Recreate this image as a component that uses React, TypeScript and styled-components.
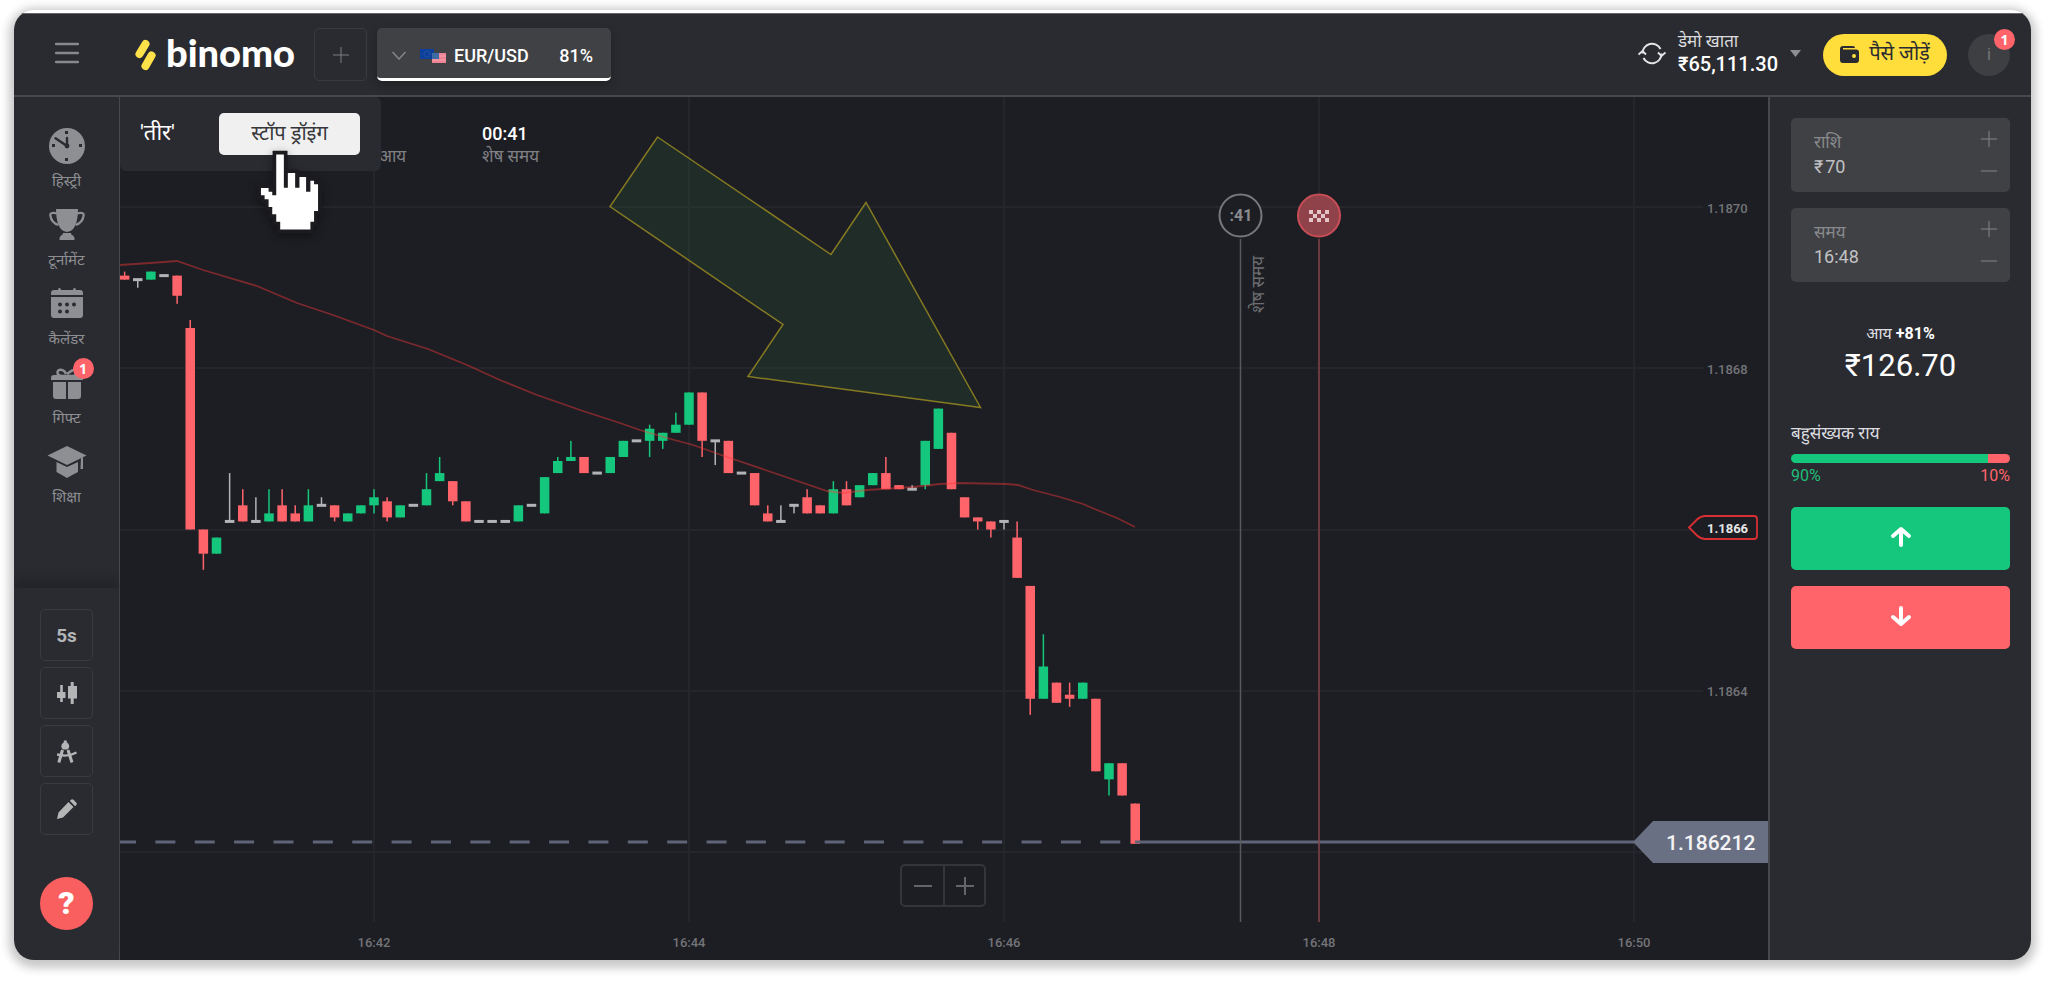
import React from "react";
import styled, { createGlobalStyle } from "styled-components";

const c = {
  panel: "#2a2b30",
  chart: "#1d1e23",
  line: "#47484c",
  raised: "#404144",
  edge: "#3a3b3f",
  icon: "#8e8f93",
  green: "#14c77c",
  red: "#ff646b",
  yellow: "#ffdd3b",
  slate: "#6a7083",
};

const Global = createGlobalStyle`
  *, *::before, *::after { box-sizing: border-box; }
  body { margin: 0; background: #fff; font-family: Roboto, "Noto Sans Devanagari", "Noto Sans", sans-serif; color: #fff; }
  button, input { font: inherit; color: inherit; margin: 0; }
  button { cursor: pointer; padding: 0; border: 0; background: none; }
  svg { display: block; flex: none; }
`;

const Page = styled.div`
  display: flex;
  min-height: 100vh;
  padding: 10px 17px 21px 14px;
`;

const Frame = styled.div`
  flex: 1;
  min-width: 0;
  display: flex;
  flex-direction: column;
  padding-top: 3px;
  background: #fff;
  border-radius: 20px;
  overflow: hidden;
  box-shadow: 0 3px 10px 5px rgba(0, 0, 0, 0.22);
`;

const Header = styled.header`
  display: flex;
  align-items: center;
  height: 84px;
  padding-right: 21px;
  background: ${c.panel};
  border-top: 1px solid #66676a;
  border-bottom: 2px solid ${c.line};
`;

const MenuButton = styled.button`
  display: flex;
  justify-content: center;
  width: 106px;
  padding-bottom: 4px;
  color: #88898c;
`;

const Logo = styled.a`
  display: flex;
  align-items: center;
  gap: 10px;
  width: 179px;
  padding-left: 15px;
  color: #fff;
  text-decoration: none;
`;

const Wordmark = styled.span`
  padding-bottom: 5px;
  font: 900 38px/40px Lato, sans-serif;
`;

const AddTab = styled.button`
  display: grid;
  place-items: center;
  width: 53px;
  height: 53px;
  margin-left: 15px;
  border: 1px solid ${c.edge};
  border-radius: 5px;
  color: #7d7e82;
`;

const AssetTab = styled.button`
  display: flex;
  align-items: center;
  width: 234px;
  height: 53px;
  margin-left: 10px;
  padding: 5px 18px 0 15px;
  background: ${c.raised};
  border-bottom: 3px solid #fff;
  border-radius: 5px;
  box-shadow: 0 4px 10px rgba(0, 0, 0, 0.25);
  font-size: 18px;
  font-weight: 500;
  line-height: 22px;
`;

const AssetName = styled.span`
  flex: 1;
  padding-left: 8px;
  text-align: left;
`;

const Account = styled.button`
  display: flex;
  align-items: center;
  gap: 12px;
  margin-left: auto;
  padding-bottom: 3px;
  text-align: left;
`;

const AccountText = styled.span`
  display: flex;
  flex-direction: column;
  font-size: 17px;
  line-height: 23px;
  color: #dcdcde;
`;

const Balance = styled.strong`
  font-size: 20px;
  font-weight: 500;
  color: #fff;
`;

const Deposit = styled.button`
  display: flex;
  align-items: center;
  justify-content: center;
  gap: 10px;
  width: 124px;
  height: 42px;
  margin-left: 22px;
  border-radius: 21px;
  background: ${c.yellow};
  color: #2a2b30;
  font-size: 20px;
`;

const Avatar = styled.button`
  position: relative;
  width: 42px;
  height: 42px;
  margin-left: 21px;
  border-radius: 50%;
  background: #3e3f43;
  color: #77787c;
  font-size: 16px;
`;

const Badge = styled.span<{ $top: number; $right: number }>`
  position: absolute;
  top: ${(p) => p.$top}px;
  right: ${(p) => p.$right}px;
  width: 21px;
  height: 21px;
  border-radius: 50%;
  background: ${c.red};
  color: #fff;
  font: 700 14px/21px "Open Sans", sans-serif;
  text-align: center;
`;

const Body = styled.div`
  flex: 1;
  display: grid;
  grid-template-columns: 106px minmax(0, 1fr) 263px;
`;

const Sidebar = styled.aside`
  display: flex;
  flex-direction: column;
  background: ${c.panel};
  border-right: 1px solid ${c.line};
`;

const Nav = styled.nav`
  flex: 1;
  display: flex;
  flex-direction: column;
  align-items: center;
  padding-top: 31px;
`;

const NavItem = styled.a`
  position: relative;
  display: flex;
  flex-direction: column;
  align-items: center;
  gap: 7px;
  height: 79px;
  color: ${c.icon};
  font-size: 15px;
  line-height: 20px;
  text-decoration: none;
`;

const Tools = styled.div`
  display: flex;
  flex-direction: column;
  align-items: center;
  gap: 6px;
  padding: 21px 0 30px;
  box-shadow: 0 -8px 12px rgba(0, 0, 0, 0.2);
`;

const Tool = styled.button`
  display: grid;
  place-items: center;
  width: 53px;
  height: 52px;
  border: 1px solid ${c.edge};
  border-radius: 5px;
  color: #b4b5b7;
  font-size: 19px;
  font-weight: 700;
`;

const Help = styled.button`
  width: 53px;
  height: 53px;
  margin-top: 36px;
  border-radius: 50%;
  background: #fa5f60;
  font-size: 32px;
  font-weight: 900;
  line-height: 53px;
`;

const ChartArea = styled.main`
  position: relative;
  background: ${c.chart};
  font-size: 16px;
`;

const Drawing = styled.svg`
  width: 100%;
  height: auto;
`;

const Stats = styled.div`
  position: absolute;
  top: 26px;
  left: 259px;
  display: flex;
`;

const Stat = styled.div`
  width: 103px;
  height: 44px;
  display: flex;
  flex-direction: column;
  justify-content: flex-end;
  font-size: 17px;
  line-height: 22px;
  color: #808185;
`;

const StatValue = styled.strong`
  font-size: 18px;
  font-weight: 500;
  color: #fff;
`;

const DrawBar = styled.div`
  position: absolute;
  top: 0;
  left: 0;
  display: flex;
  align-items: center;
  justify-content: space-between;
  width: 261px;
  height: 74px;
  padding: 0 21px 0 20px;
  background: ${c.panel};
  border-radius: 0 6px 6px 6px;
  font-size: 22px;
`;

const StopButton = styled.button`
  width: 141px;
  height: 42px;
  background: #f0f0f0;
  border-radius: 5px;
  color: #36373b;
  font-size: 20px;
`;

const Pointer = styled.svg`
  position: absolute;
  top: 50px;
  left: 133px;
  filter: drop-shadow(0 3px 5px rgba(0, 0, 0, 0.4));
`;

const Zoom = styled.div`
  position: absolute;
  bottom: 53px;
  left: 780px;
  display: flex;
  border: 2px solid #343539;
  border-radius: 5px;
  color: #646569;
`;

const ZoomButton = styled.button`
  display: grid;
  place-items: center;
  width: 41px;
  height: 39px;
  & + & { border-left: 2px solid #343539; }
`;

const Trade = styled.aside`
  display: flex;
  flex-direction: column;
  padding: 21px 21px 0;
  background: ${c.panel};
  border-left: 2px solid ${c.line};
`;

const Field = styled.div`
  display: flex;
  justify-content: space-between;
  height: 74px;
  margin-bottom: 16px;
  padding: 12px 13px 12px 23px;
  background: ${c.raised};
  border-radius: 5px;
`;

const FieldText = styled.div`
  display: flex;
  flex-direction: column;
  min-width: 0;
`;

const FieldLabel = styled.label`
  font-size: 17px;
  line-height: 25px;
  color: #88898d;
`;

const FieldInput = styled.input`
  width: 120px;
  height: 22px;
  padding: 0;
  border: 0;
  background: none;
  color: #c1c2c4;
  font-size: 18px;
`;

const Steps = styled.div`
  display: flex;
  flex-direction: column;
  justify-content: space-between;
  color: #85868a;
  button { height: 18px; }
`;

const Income = styled.div`
  padding-top: 22px;
  text-align: center;
  font-size: 16px;
  line-height: 28px;
  color: #dedee0;
  strong { color: #fff; font-weight: 700; }
`;

const IncomeSum = styled.div`
  font-size: 31px;
  line-height: 36px;
  color: #fff;
`;

const Opinion = styled.div`
  margin-top: 35px;
  font-size: 17px;
  line-height: 28px;
  color: #dedee0;
`;

const Bar = styled.div`
  display: flex;
  height: 9px;
  margin-top: 7px;
  border-radius: 5px;
  overflow: hidden;
`;

const Share = styled.span<{ $part: number; $color: string }>`
  flex: ${(p) => p.$part};
  background: ${(p) => p.$color};
`;

const Shares = styled.div`
  display: flex;
  justify-content: space-between;
  margin: 4px 0 22px;
  font-size: 16px;
  line-height: 18px;
`;

const Tint = styled.span<{ $color: string }>`
  color: ${(p) => p.$color};
`;

const Deal = styled.button<{ $color: string }>`
  display: grid;
  place-items: center;
  height: 63px;
  margin-bottom: 16px;
  padding-bottom: 4px;
  background: ${(p) => p.$color};
  border-radius: 5px;
`;

const PlusIcon = ({ size = 16, width = 1 }: { size?: number; width?: number }) => (
  <svg width={size} height={size} viewBox={`0 0 ${size} ${size}`} stroke="currentColor" strokeWidth={width}>
    <path d={`M0 ${size / 2}H${size}M${size / 2} 0V${size}`} />
  </svg>
);

const MinusIcon = ({ size = 16, width = 1 }: { size?: number; width?: number }) => (
  <svg width={size} height={size} viewBox={`0 0 ${size} ${size}`} stroke="currentColor" strokeWidth={width}>
    <path d={`M0 ${size / 2}H${size}`} />
  </svg>
);

const ClockIcon = () => (
  <svg width="36" height="36" viewBox="0 0 36 36">
    <circle cx="18" cy="18" r="18" fill="currentColor" />
    <g fill={c.panel}>
      <rect x="16" y="3" width="3" height="3" /><rect x="16" y="30" width="3" height="3" />
      <rect x="3" y="16" width="3" height="3" /><rect x="30" y="16" width="3" height="3" />
      <circle cx="18" cy="18" r="2.4" />
    </g>
    <path d="M18 18V10M18 18L6.500 10.200" stroke={c.panel} strokeWidth="2.400" strokeLinecap="round" />
  </svg>
);

const TrophyIcon = () => (
  <svg width="36" height="36" viewBox="0 0 36 36" fill="currentColor">
    <path d="M7 2H29C29 14 26 24.500 18 25C10 24.500 7 14 7 2Z" />
    <path d="M8 6.500C4 5 0.500 6 1.500 9C2 13 5 16.500 9.500 18M28 6.500C32 5 35.500 6 34.500 9C34 13 31 16.500 26.500 18" fill="none" stroke="currentColor" strokeWidth="2.200" />
    <path d="M14 26H22Q22 28 24 28.500Q26 30 25.500 33H10.500Q10 30 12 28.500Q14 28 14 26Z" />
  </svg>
);

const CalendarIcon = () => (
  <svg width="36" height="36" viewBox="0 0 36 36" fill="currentColor">
    <path d="M2 9V7Q2 4 5 4H9Q9 2 10.500 2Q12 2 12 4H24Q24 2 25.500 2Q27 2 27 4H31Q34 4 34 7V9Z" />
    <path d="M2 11H34V29Q34 32 31 32H5Q2 32 2 29Z" />
    <g fill={c.panel}>
      <circle cx="11" cy="18.500" r="2" /><circle cx="18" cy="18.500" r="2" /><circle cx="25" cy="18.500" r="2" />
      <circle cx="11" cy="25.500" r="2" /><circle cx="18" cy="25.500" r="2" />
    </g>
  </svg>
);

const GiftIcon = () => (
  <svg width="36" height="36" viewBox="0 -2 36 36" fill="currentColor">
    <path d="M17 7C15 1.500 8 1.500 8.500 6Q9 8.500 12 9H24C28 9 28 2 23 3.500L18 7" fill="none" stroke="currentColor" strokeWidth="2.500" />
    <path d="M2 13V11Q2 8 5 8H31Q34 8 34 11V13Z" />
    <path d="M4 15H17V32H7Q4 32 4 29ZM19 15H32V29Q32 32 29 32H19Z" />
  </svg>
);

const CapIcon = () => (
  <svg width="40" height="36" viewBox="0 0 40 36" fill="currentColor">
    <path d="M20 2L39.500 11.500L20 21L0.500 11.500Z" />
    <path d="M9.500 18L20 23L31 18V28Q26 30.500 20 34Q14 30.500 9.500 28Z" />
    <path d="M34 14L36 13V25H33.500Z" />
  </svg>
);

const nav = [
  { label: "हिस्ट्री", Icon: ClockIcon },
  { label: "टूर्नामेंट", Icon: TrophyIcon },
  { label: "कैलेंडर", Icon: CalendarIcon },
  { label: "गिफ्ट", Icon: GiftIcon, badge: "1" },
  { label: "शिक्षा", Icon: CapIcon },
];

/* Candles as [open, close, high, low], in ticks counted from the 1.1866 line. */
const FIRST = -19;
const candles: number[][] = [
  [63, 62, 64, 62], [62, 62, 62, 60], [62, 64], [63, 63], [63, 58, 63, 56], [50, 0, 52, 0], [0, -6, 0, -10],
  [-6, -2], [2, 2, 14, 2], [6, 2, 10, 2], [2, 2, 8, 2], [2, 4, 10, 2], [6, 2, 10, 2], [4, 2, 6, 2], [2, 6, 10, 2],
  [6, 6, 8, 6], [6, 3, 6, 2], [2, 4], [4, 6], [6, 8, 10, 4], [7, 3, 8, 2], [3, 6], [6, 6], [6, 10, 14, 6],
  [12, 14, 18, 12], [12, 7, 12, 6], [7, 2], [2, 2], [2, 2], [2, 2], [2, 6], [6, 6], [4, 13], [14, 17, 18, 14],
  [17, 18, 22, 17], [18, 14], [14, 14], [14, 18], [18, 22], [22, 22], [22, 25, 26, 18], [22, 24, 24, 20],
  [24, 26, 29, 24], [26, 34], [34, 22, 34, 18], [22, 22, 22, 16], [22, 14], [14, 14], [14, 6], [4, 2, 6, 2],
  [2, 2, 6, 2], [6, 6, 6, 4], [8, 4, 10, 4], [6, 4], [4, 10, 12, 4], [10, 6, 12, 6], [8, 11], [11, 14],
  [14, 10, 18, 10], [11, 10], [10, 10, 11, 10], [11, 22, 22, 10], [20, 30], [24, 10], [8, 3], [3, 2, 3, 0],
  [2, 0, 2, -2], [2, 2, 2, 0], [-2, -12, 2, -12], [-14, -42, -14, -46], [-42, -34, -26, -42], [-38, -43],
  [-41, -42, -38, -44], [-42, -38], [-42, -60], [-62, -58, -58, -66], [-58, -66], [-68, -78],
];
const candleX = (k: number) => 254 + k * 13.125;
const tickY = (t: number) => 432.5 - t * 4.03;

const average =
  "0,168 30,166 57,164 83,173 137,189 177,206 213,218 254,233 267,239 308,252 347,268 380,283 417,298 463,314 500,326 520,333 547,341 573,348 607,360 660,378 707,394 723,396 747,393 793,390 820,387 840,386 887,387 898,388 913,393 940,400 963,407 977,413 997,421 1015,430";

const Candle = ({ k, data }: { k: number; data: number[] }) => {
  const [open, close, high = Math.max(open, close), low = Math.min(open, close)] = data;
  const flat = open === close;
  const fill = flat ? "#b2b3b6" : close > open ? c.green : c.red;
  const top = flat ? tickY(open) - 1.5 : tickY(Math.max(open, close));
  const height = flat ? 3 : Math.abs(open - close) * 4.03;
  return (
    <g fill={fill}>
      <rect x={candleX(k) - 0.75} y={tickY(high)} width="1.500" height={tickY(low) - tickY(high)} />
      <rect x={candleX(k) - 4.75} y={top} width="9.500" height={height} />
    </g>
  );
};

const Chart = () => (
  <Drawing viewBox="0 0 1648 863" role="img" aria-label="EUR/USD">
    <g stroke="#25262b" strokeWidth="2">
      {[254, 569, 884, 1199, 1514].map((x) => <path key={x} d={`M${x} 0V825`} />)}
      {[110, 271, 433, 594, 755].map((y) => <path key={y} d={`M0 ${y}H1583`} />)}
    </g>
    <g fill="#737478" fontSize="13" fontWeight="500">
      <text x="1587" y="116">1.1870</text>
      <text x="1587" y="277">1.1868</text>
      <text x="1587" y="599">1.1864</text>
      <g textAnchor="middle">
        {["16:42", "16:44", "16:46", "16:48", "16:50"].map((t, i) => <text key={t} x={254 + i * 315} y="850">{t}</text>)}
      </g>
    </g>
    <path d="M-4 745H1015" stroke="#5f6478" strokeWidth="3" strokeDasharray="20 19.370" />
    {candles.map((data, i) => <Candle key={i} k={i + FIRST} data={data} />)}
    <polyline points={average} fill="none" stroke="#ff3a3a" strokeOpacity="0.420" strokeWidth="1.800" />
    <path d="M1015 745H1514" stroke="#5f6478" strokeWidth="3" />
    <path d="M537.500 40L711 157.500L746 105.500L860.500 310.500L628 279.500L663 227.500L490 109.500Z" fill="#2b5a35" fillOpacity="0.240" stroke="#857a22" strokeWidth="1.500" />
    <path d="M1120.500 142V825" stroke="#58595d" strokeWidth="1.500" />
    <circle cx="1120.500" cy="118.500" r="21" fill={c.chart} stroke="#77787c" strokeWidth="2" />
    <text x="1121" y="124" textAnchor="middle" fill="#8a8b8f" fontSize="16" fontWeight="700">:41</text>
    <text transform="translate(1144 216) rotate(-90)" fill="#6d6e72" fontSize="17">शेष समय</text>
    <path d="M1199 142V825" stroke="#80434a" strokeWidth="1.500" />
    <circle cx="1199" cy="118.500" r="21" fill="#8f4249" stroke="#c84d56" strokeWidth="2" />
    <g fill="#e3c4c7">
      {[[0, 0], [8, 0], [16, 0], [4, 4], [12, 4], [0, 8], [8, 8], [16, 8]].map(([x, y]) => (
        <rect key={`${x}-${y}`} x={1189 + x} y={113 + y} width="4" height="4" />
      ))}
    </g>
    <path d="M1569 430.500L1577 422.500Q1581 419 1585 419H1634Q1637 419 1637 422V439Q1637 442 1634 442H1585Q1581 442 1577 438.500Z" fill={c.chart} stroke="#d92f33" strokeWidth="1.800" />
    <text x="1587" y="436" fill="#e6e6e8" fontSize="13" fontWeight="700">1.1866</text>
    <path d="M1513 745L1533 724H1648V766H1533Z" fill={c.slate} />
    <text x="1546" y="753" fill="#f3f3f5" fontSize="21" fontWeight="500">1.186212</text>
  </Drawing>
);

const ValueField = ({ id, label, value }: { id: string; label: string; value: string }) => (
  <Field>
    <FieldText>
      <FieldLabel htmlFor={id}>{label}</FieldLabel>
      <FieldInput id={id} defaultValue={value} />
    </FieldText>
    <Steps>
      <button type="button" aria-label={`${label} +`}><PlusIcon /></button>
      <button type="button" aria-label={`${label} −`}><MinusIcon /></button>
    </Steps>
  </Field>
);

export default function App() {
  return (
    <Page>
      <Global />
      <Frame>
        <Header>
          <MenuButton aria-label="Menu">
            <svg width="24" height="22" viewBox="0 0 24 22" stroke="currentColor" strokeWidth="2.400" strokeLinecap="round">
              <path d="M1 2H23M1 11H23M1 20H23" />
            </svg>
          </MenuButton>
          <Logo href="#">
            <svg width="21" height="32" viewBox="0 0 21 32" stroke="#ffe14a" strokeWidth="8" strokeLinecap="round">
              <path d="M10.500 5L4.500 15" /><path d="M16.500 16.500L10.500 27" />
            </svg>
            <Wordmark>binomo</Wordmark>
          </Logo>
          <AddTab aria-label="Add"><PlusIcon /></AddTab>
          <AssetTab>
            <svg width="14" height="9" viewBox="0 0 14 9" fill="none" stroke="#85868a" strokeWidth="1.500"><path d="M0.500 1L7 8L13.500 1" /></svg>
            <svg width="40" height="14" viewBox="0 0 40 14">
              <rect x="14" y="0" width="14" height="10" fill="#0d3f9c" />
              <circle cx="21" cy="5" r="3" fill="none" stroke="#3b6a8f" strokeDasharray="1 1" />
              <rect x="26" y="4" width="14" height="10" fill="#ef8294" />
              <path d="M26 7H40M26 11H40" stroke="#f3a3b0" />
              <rect x="26" y="4" width="7" height="6" fill="#3d6ca5" />
            </svg>
            <AssetName>EUR/USD</AssetName>
            <span>81%</span>
          </AssetTab>
          <Account>
            <svg width="28" height="23" viewBox="0 0 28 23" fill="none" stroke="#e4e4e6" strokeWidth="2">
              <path d="M4.500 11.500A9.500 9.500 0 0 1 22.500 7M23.500 11.500A9.500 9.500 0 0 1 5.500 16" />
              <path d="M0.500 12.500L4.500 9L8 12.500M20 10.500L23.500 14L27.500 10.500" strokeWidth="1.800" />
            </svg>
            <AccountText>
              डेमो खाता
              <Balance>₹65,111.30</Balance>
            </AccountText>
            <svg width="11" height="7" viewBox="0 0 11 7" fill="#8d8e92"><path d="M0 0H11L5.500 7Z" /></svg>
          </Account>
          <Deposit>
            <svg width="19" height="17" viewBox="0 0 19 17">
              <path d="M3 0H13Q15 0 15 2H3V3.500H16Q19 3.500 19 6V14Q19 17 16 17H3Q0 17 0 14V3Q0 0 3 0Z" fill="#2a2b30" />
              <circle cx="14" cy="10" r="2" fill={c.yellow} />
            </svg>
            पैसे जोड़ें
          </Deposit>
          <Avatar>i<Badge $top={-5} $right={-5}>1</Badge></Avatar>
        </Header>
        <Body>
          <Sidebar>
            <Nav>
              {nav.map(({ label, Icon, badge }) => (
                <NavItem href="#" key={label}>
                  <Icon />
                  {label}
                  {badge && <Badge $top={-7} $right={-9}>{badge}</Badge>}
                </NavItem>
              ))}
            </Nav>
            <Tools>
              <Tool>5s</Tool>
              <Tool aria-label="Chart type">
                <svg width="20" height="22" viewBox="0 0 20 22" fill="currentColor">
                  <path d="M3.200 3H5.800V10H8.500V16H5.800V20H3.200V16H0V10H3.200ZM13.700 0H16.700V4H20V16.500H16.700V22H13.700V16.500H11V4H13.700Z" />
                </svg>
              </Tool>
              <Tool aria-label="Drawing tools">
                <svg width="20" height="23" viewBox="0 0 20 23" fill="currentColor">
                  <path d="M6.800 0.500H9.800V2.500A4 4 0 0 1 10.500 9.500H6A4 4 0 0 1 6.800 2.500Z" />
                  <path d="M5.500 10L1.800 22.500M11 10L15 22.500" fill="none" stroke="currentColor" strokeWidth="3" />
                  <path d="M0 14.500Q11 17.500 19.500 12.500" fill="none" stroke="currentColor" strokeWidth="2.400" />
                </svg>
              </Tool>
              <Tool aria-label="Pencil">
                <svg width="20" height="20" viewBox="0 0 20 20" fill="currentColor">
                  <path d="M11.500 3L16.500 8L6 18.500L0 20L1.500 13.500ZM12.800 1.800L14 0.700Q15 -0.300 16.500 0.800L19.200 3.500Q20.300 5 19.300 6L18 7.200Z" />
                </svg>
              </Tool>
              <Help aria-label="Help">?</Help>
            </Tools>
          </Sidebar>
          <ChartArea>
            <Chart />
            <Stats>
              <Stat>आय</Stat>
              <Stat><StatValue>00:41</StatValue>शेष समय</Stat>
            </Stats>
            <DrawBar>
              <span>'तीर'</span>
              <StopButton>स्टॉप ड्रॉइंग</StopButton>
            </DrawBar>
            <Pointer width="73" height="90" viewBox="400 380 220 270">
              <path
                d="M470 402H493V502H505V458H527V502H540V470H560V514H573V481H584V492H596V572H584V605H573V628H482V605H470V582H458V560H447V537H435V525H424V503H447V514H458V525H470Z"
                fill="#fff" stroke="#1c1c20" strokeWidth="22" paintOrder="stroke"
              />
            </Pointer>
            <Zoom>
              <ZoomButton aria-label="Zoom out"><MinusIcon size={18} width={2} /></ZoomButton>
              <ZoomButton aria-label="Zoom in"><PlusIcon size={18} width={2} /></ZoomButton>
            </Zoom>
          </ChartArea>
          <Trade>
            <ValueField id="amount" label="राशि" value={"₹\u200a70"} />
            <ValueField id="time" label="समय" value="16:48" />
            <Income>
              आय <strong>+81%</strong>
              <IncomeSum>₹126.70</IncomeSum>
            </Income>
            <Opinion>
              बहुसंख्यक राय
              <Bar><Share $part={90} $color={c.green} /><Share $part={10} $color={c.red} /></Bar>
              <Shares><Tint $color="#1fbf79">90%</Tint><Tint $color={c.red}>10%</Tint></Shares>
            </Opinion>
            <Deal $color={c.green} aria-label="Up">
              <svg width="22" height="22" viewBox="0 0 22 22" fill="none" stroke="#fff" strokeWidth="4" strokeLinecap="round" strokeLinejoin="round"><path d="M11 19V4M3 10L11 3L19 10" /></svg>
            </Deal>
            <Deal $color={c.red} aria-label="Down">
              <svg width="22" height="22" viewBox="0 0 22 22" fill="none" stroke="#fff" strokeWidth="4" strokeLinecap="round" strokeLinejoin="round"><path d="M11 3V18M3 12L11 19L19 12" /></svg>
            </Deal>
          </Trade>
        </Body>
      </Frame>
    </Page>
  );
}
